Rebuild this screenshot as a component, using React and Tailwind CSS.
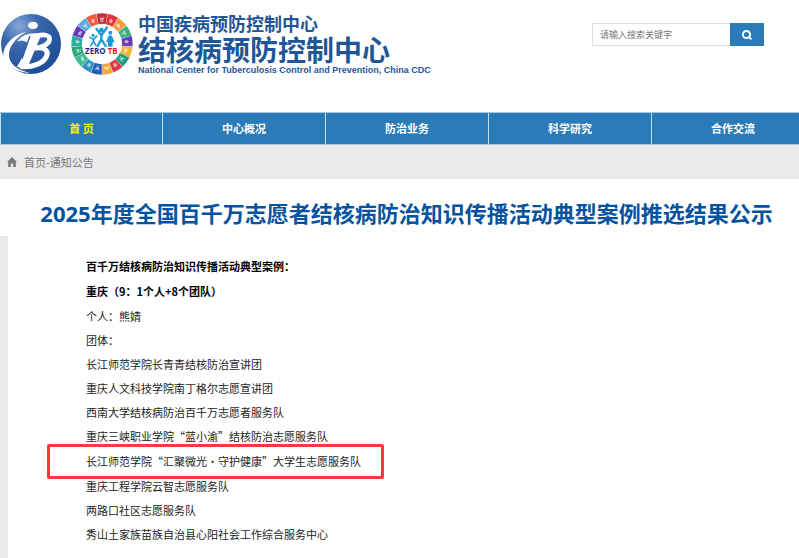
import React from "react";

const navItems = ["首 页", "中心概况", "防治业务", "科学研究", "合作交流"];

const teams = [
  { name: "长江师范学院长青青结核防治宣讲团" },
  { name: "重庆人文科技学院南丁格尔志愿宣讲团" },
  { name: "西南大学结核病防治百千万志愿者服务队" },
  { name: "重庆三峡职业学院“蓝小渝”结核防治志愿服务队" },
  { name: "长江师范学院“汇聚微光·守护健康”大学生志愿服务队", marked: true },
  { name: "重庆工程学院云智志愿服务队" },
  { name: "两路口社区志愿服务队" },
  { name: "秀山土家族苗族自治县心阳社会工作综合服务中心" },
];

// clockwise from the top
const wheelColors = [
  "#c5303a",
  "#e4353f",
  "#f79a3e",
  "#35b184",
  "#6a3bb8",
  "#f0b535",
  "#1d9c80",
  "#d93c48",
  "#efaa3a",
  "#2559b4",
  "#2f97c6",
  "#3fbd93",
  "#2ba877",
  "#2cab9f",
  "#6838b9",
  "#5aaae0",
  "#ee5a40",
];

const CenterLogo = () => (
  <svg viewBox="0 3 186 186" className="size-[62px] shrink-0" aria-hidden="true">
    <defs>
      <radialGradient id="ball" cx="0.3" cy="0.2" r="0.8">
        <stop offset="0" stopColor="#86a8d6" />
        <stop offset="0.4" stopColor="#3a68ad" />
        <stop offset="1" stopColor="#1f4f98" />
      </radialGradient>
    </defs>
    <circle cx="93" cy="96" r="90" fill="url(#ball)" />
    <ellipse cx="99" cy="40" rx="15" ry="11" fill="#fff" />
    <path
      d="M78 60C42 68 14 94 10 124C7 156 44 180 90 183C50 174 24 154 27 124C30 98 52 74 78 60Z"
      fill="#fff"
    />
    <path
      d="M52 88C64 72 82 64 104 64L126 64L80 172L50 164C62 150 70 128 82 92C72 84 62 84 52 88Z"
      fill="#fff"
    />
    <g fill="none" stroke="#fff" strokeLinecap="round" strokeLinejoin="round">
      <path d="M112 71C134 66 150 70 149 82C147 97 126 106 108 108" strokeWidth="14" />
      <path d="M108 108C132 104 147 116 140 132C131 154 98 166 66 164" strokeWidth="15" />
    </g>
    <path d="M90 72L66 140" stroke="#2b5ca4" strokeWidth="4" />
  </svg>
);

const ZeroTbLogo = () => {
  const step = 360 / wheelColors.length;
  const point = (r, deg) => {
    const a = (deg * Math.PI) / 180;
    return `${(100 + r * Math.sin(a)).toFixed(2)} ${(100 - r * Math.cos(a)).toFixed(2)}`;
  };

  return (
    <svg viewBox="0 0 200 200" className="size-[66px] shrink-0" aria-hidden="true">
      {wheelColors.map((color, i) => {
        const from = i * step - step / 2 + 0.4;
        const to = i * step + step / 2 - 0.4;
        return (
          <g key={i}>
            <path
              d={`M${point(93, from)}A93 93 0 0 1 ${point(93, to)}L${point(61, to)}A61 61 0 0 0 ${point(61, from)}Z`}
              fill={color}
            />
            <g transform={`rotate(${i * step} 100 100)`} fill="#fff" opacity="0.6">
              {i % 3 === 0 && <path d="M93 18L100 22L107 18L105 27L100 30L95 27ZM95 31H105V33H95Z" />}
              {i % 3 === 1 && <path d="M93 25L100 18L107 25H104V31H96V25Z" />}
              {i % 3 === 2 && <path d="M93 21H103V24H107V30H93Z" />}
            </g>
          </g>
        );
      })}
      <g fill="none" stroke="#1e9ad6" strokeWidth="7" strokeLinecap="round">
        <path d="M83 54L98 74L115 50M98 74V88M98 86L87 106M98 86L111 106" />
        <path d="M63 80L74 86L84 76M74 84V92M74 92L66 105M74 92L82 105" strokeWidth="5" />
      </g>
      <g fill="#1e9ad6">
        <circle cx="98" cy="58" r="7" />
        <circle cx="73" cy="74" r="5" />
        <circle cx="125" cy="66" r="6" />
        <path d="M120 74H130L138 95H132V108H118V95H112Z" />
      </g>
      <text
        x="98"
        y="131"
        textAnchor="middle"
        fontFamily="Open Sans, sans-serif"
        fontWeight="700"
        fontSize="24"
        fill="#1d2a86"
      >
        ZERO <tspan fill="#e0252f">TB</tspan>
      </text>
    </svg>
  );
};

const Header = () => (
  <header className="flex h-28 items-start justify-between pr-[35px]">
    <div className="flex items-center pt-[11px] text-[#1f5699]">
      <CenterLogo />
      <div className="ml-[7px]">
        <ZeroTbLogo />
      </div>
      <div className="ml-[3px] font-bold whitespace-nowrap">
        <p className="text-[18px] leading-[22px]">中国疾病预防控制中心</p>
        <p className="text-[28px] leading-[30px]">结核病预防控制中心</p>
        <p className="font-['Liberation_Sans',sans-serif] text-[9px] leading-3">
          National Center for Tuberculosis Control and Prevention, China CDC
        </p>
      </div>
    </div>

    <form className="mt-[23px] flex h-[23px]" onSubmit={(e) => e.preventDefault()}>
      <input
        type="text"
        aria-label="请输入搜索关键字"
        placeholder="请输入搜索关键字"
        className="w-[138px] border border-r-0 border-[#dcdcdc] bg-white px-[7px] text-[9px] text-[#555] outline-none placeholder:text-[#777]"
      />
      <button
        type="submit"
        aria-label="搜索"
        className="flex w-[34px] items-center justify-center bg-[#2b7bb9] text-white"
      >
        <svg viewBox="0 0 12 12" className="size-3" fill="none" stroke="currentColor" strokeWidth="2">
          <circle cx="5.5" cy="5.5" r="3.6" />
          <path d="M7.4 7.4L10.4 10.4" />
        </svg>
      </button>
    </form>
  </header>
);

const Nav = () => (
  <nav className="flex h-[33px] overflow-hidden border-y border-[#a9cbe4] bg-[#2b7bb9]">
    {navItems.map((item, index) => (
      <a
        key={item}
        href="#"
        className={`flex w-[163px] shrink-0 grow items-center justify-center border-r border-[#c3dcee] text-[11px] font-bold ${
          index === 0 ? "border-l text-[#f4f400]" : "text-white"
        }`}
      >
        {item}
      </a>
    ))}
  </nav>
);

const Breadcrumb = () => (
  <div className="flex h-[34px] items-center bg-[#eaeaea] pl-[7px] text-[11px] text-[#777]">
    <svg viewBox="0 0 10 10" className="mr-[7px] size-[10px]" fill="#777" aria-hidden="true">
      <path d="M5 0L10 5H8.8V10H6.2V6.6H3.8V10H1.2V5H0Z" />
    </svg>
    <a href="#">首页</a>-<a href="#">通知公告</a>
  </div>
);

const App = () => {
  return (
    <div className="flex min-h-screen flex-col overflow-hidden bg-white font-['Noto_Sans_CJK_SC',sans-serif]">
      <Header />
      <Nav />
      <Breadcrumb />

      <h1 className="flex h-[57px] items-center justify-center pt-[11px] pl-[14px] font-['Open_Sans','Noto_Sans_CJK_SC',sans-serif] text-[22px] leading-8 font-bold whitespace-nowrap text-[#05529f]">
        2025年度全国百千万志愿者结核病防治知识传播活动典型案例推选结果公示
      </h1>

      <main className="grow border-l-8 border-[#eaeaea] pt-[18px] pb-[10px] pl-[78px] text-[11px] leading-6 text-[#222]">
        <p className="leading-[25px] font-bold text-black">百千万结核病防治知识传播活动典型案例：</p>
        <p className="leading-[25px] font-bold text-black">重庆（9：1个人+8个团队）</p>
        <p>个人：熊婧</p>
        <p>团体：</p>
        <ul>
          {teams.map((team) =>
            team.marked ? (
              <li key={team.name} className="relative leading-[26px]">
                {team.name}
                <span className="absolute -top-1 -left-[39px] h-[35px] w-[337px] rounded-xs border-3 border-[#f93a3a]" />
              </li>
            ) : (
              <li key={team.name}>{team.name}</li>
            )
          )}
        </ul>
      </main>
    </div>
  );
};

export default App;
